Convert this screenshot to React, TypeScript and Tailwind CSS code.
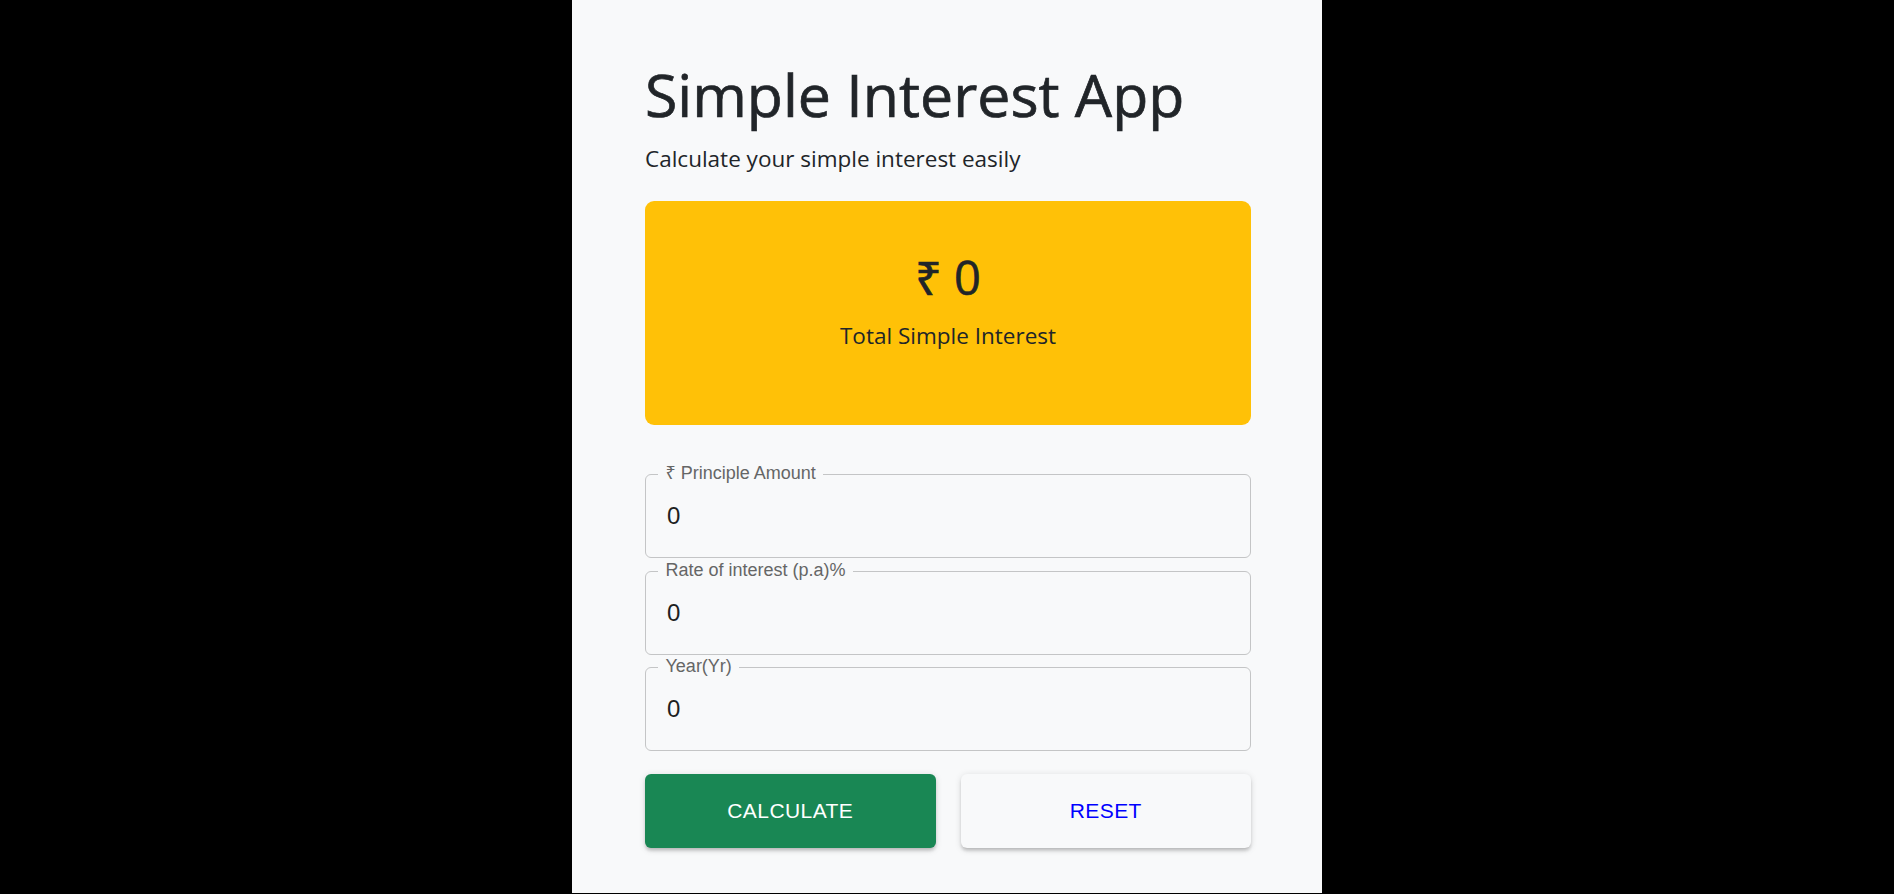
export default function App() {
  const fields = ["₹ Principle Amount", "Rate of interest (p.a)%", "Year(Yr)"];
  return (
    <div className="min-h-[894px] bg-black">
      <div className="mx-auto h-[893px] w-[750px] bg-[#f8f9fa] pl-[73px] pr-[71px] pt-[59px] font-['Open_Sans','Noto_Sans',sans-serif] text-[#212529]">
        <h1 className="text-[59px] font-normal leading-[71px] [-webkit-text-stroke:0.7px_#212529]">Simple Interest App</h1>
        <p className="mt-[11px] text-[22.5px] leading-[36px]">Calculate your simple interest easily</p>

        <div className="mt-[24px] h-[224px] rounded-[9px] bg-[#ffc107] pt-[48px] text-center">
          <h2 className="text-[47px] font-normal leading-[56px] [-webkit-text-stroke:0.6px_#212529]">₹ 0</h2>
          <p className="mt-[13px] text-[22.5px] leading-[36px]">Total Simple Interest</p>
        </div>

        <div className="mt-[49px] flex flex-col gap-[12.5px] font-['Liberation_Sans','Noto_Sans',sans-serif]">
          {fields.map((label) => (
            <div
              key={label}
              className="relative flex h-[84px] items-center rounded-[6px] border border-[#c4c5c6] pl-[21px]"
            >
              <span className="absolute left-[12px] top-[-2px] -translate-y-1/2 bg-[#f8f9fa] px-[7.5px] text-[18px] leading-[18px] text-[#656666]">
                {label}
              </span>
              <span className="text-[24px] leading-[34px] text-[#1e1f1f]">0</span>
            </div>
          ))}
        </div>

        <div className="mt-[23px] grid grid-cols-2 gap-[25px] font-['Liberation_Sans','Noto_Sans',sans-serif]">
          <button className="flex h-[74px] items-center justify-center rounded-[6px] bg-[#198754] text-[21px] tracking-[0.02em] text-white shadow-[0_3px_1.5px_-3px_rgba(0,0,0,0.2),0_3px_3px_0_rgba(0,0,0,0.14),0_1.5px_7.5px_0_rgba(0,0,0,0.12)]">
            CALCULATE
          </button>
          <button className="flex h-[74px] items-center justify-center rounded-[6px] bg-[#f8f9fa] text-[21px] tracking-[0.02em] text-[#0000ff] shadow-[0_3px_1.5px_-3px_rgba(0,0,0,0.2),0_3px_3px_0_rgba(0,0,0,0.14),0_1.5px_7.5px_0_rgba(0,0,0,0.12)]">
            RESET
          </button>
        </div>
      </div>
    </div>
  );
}
